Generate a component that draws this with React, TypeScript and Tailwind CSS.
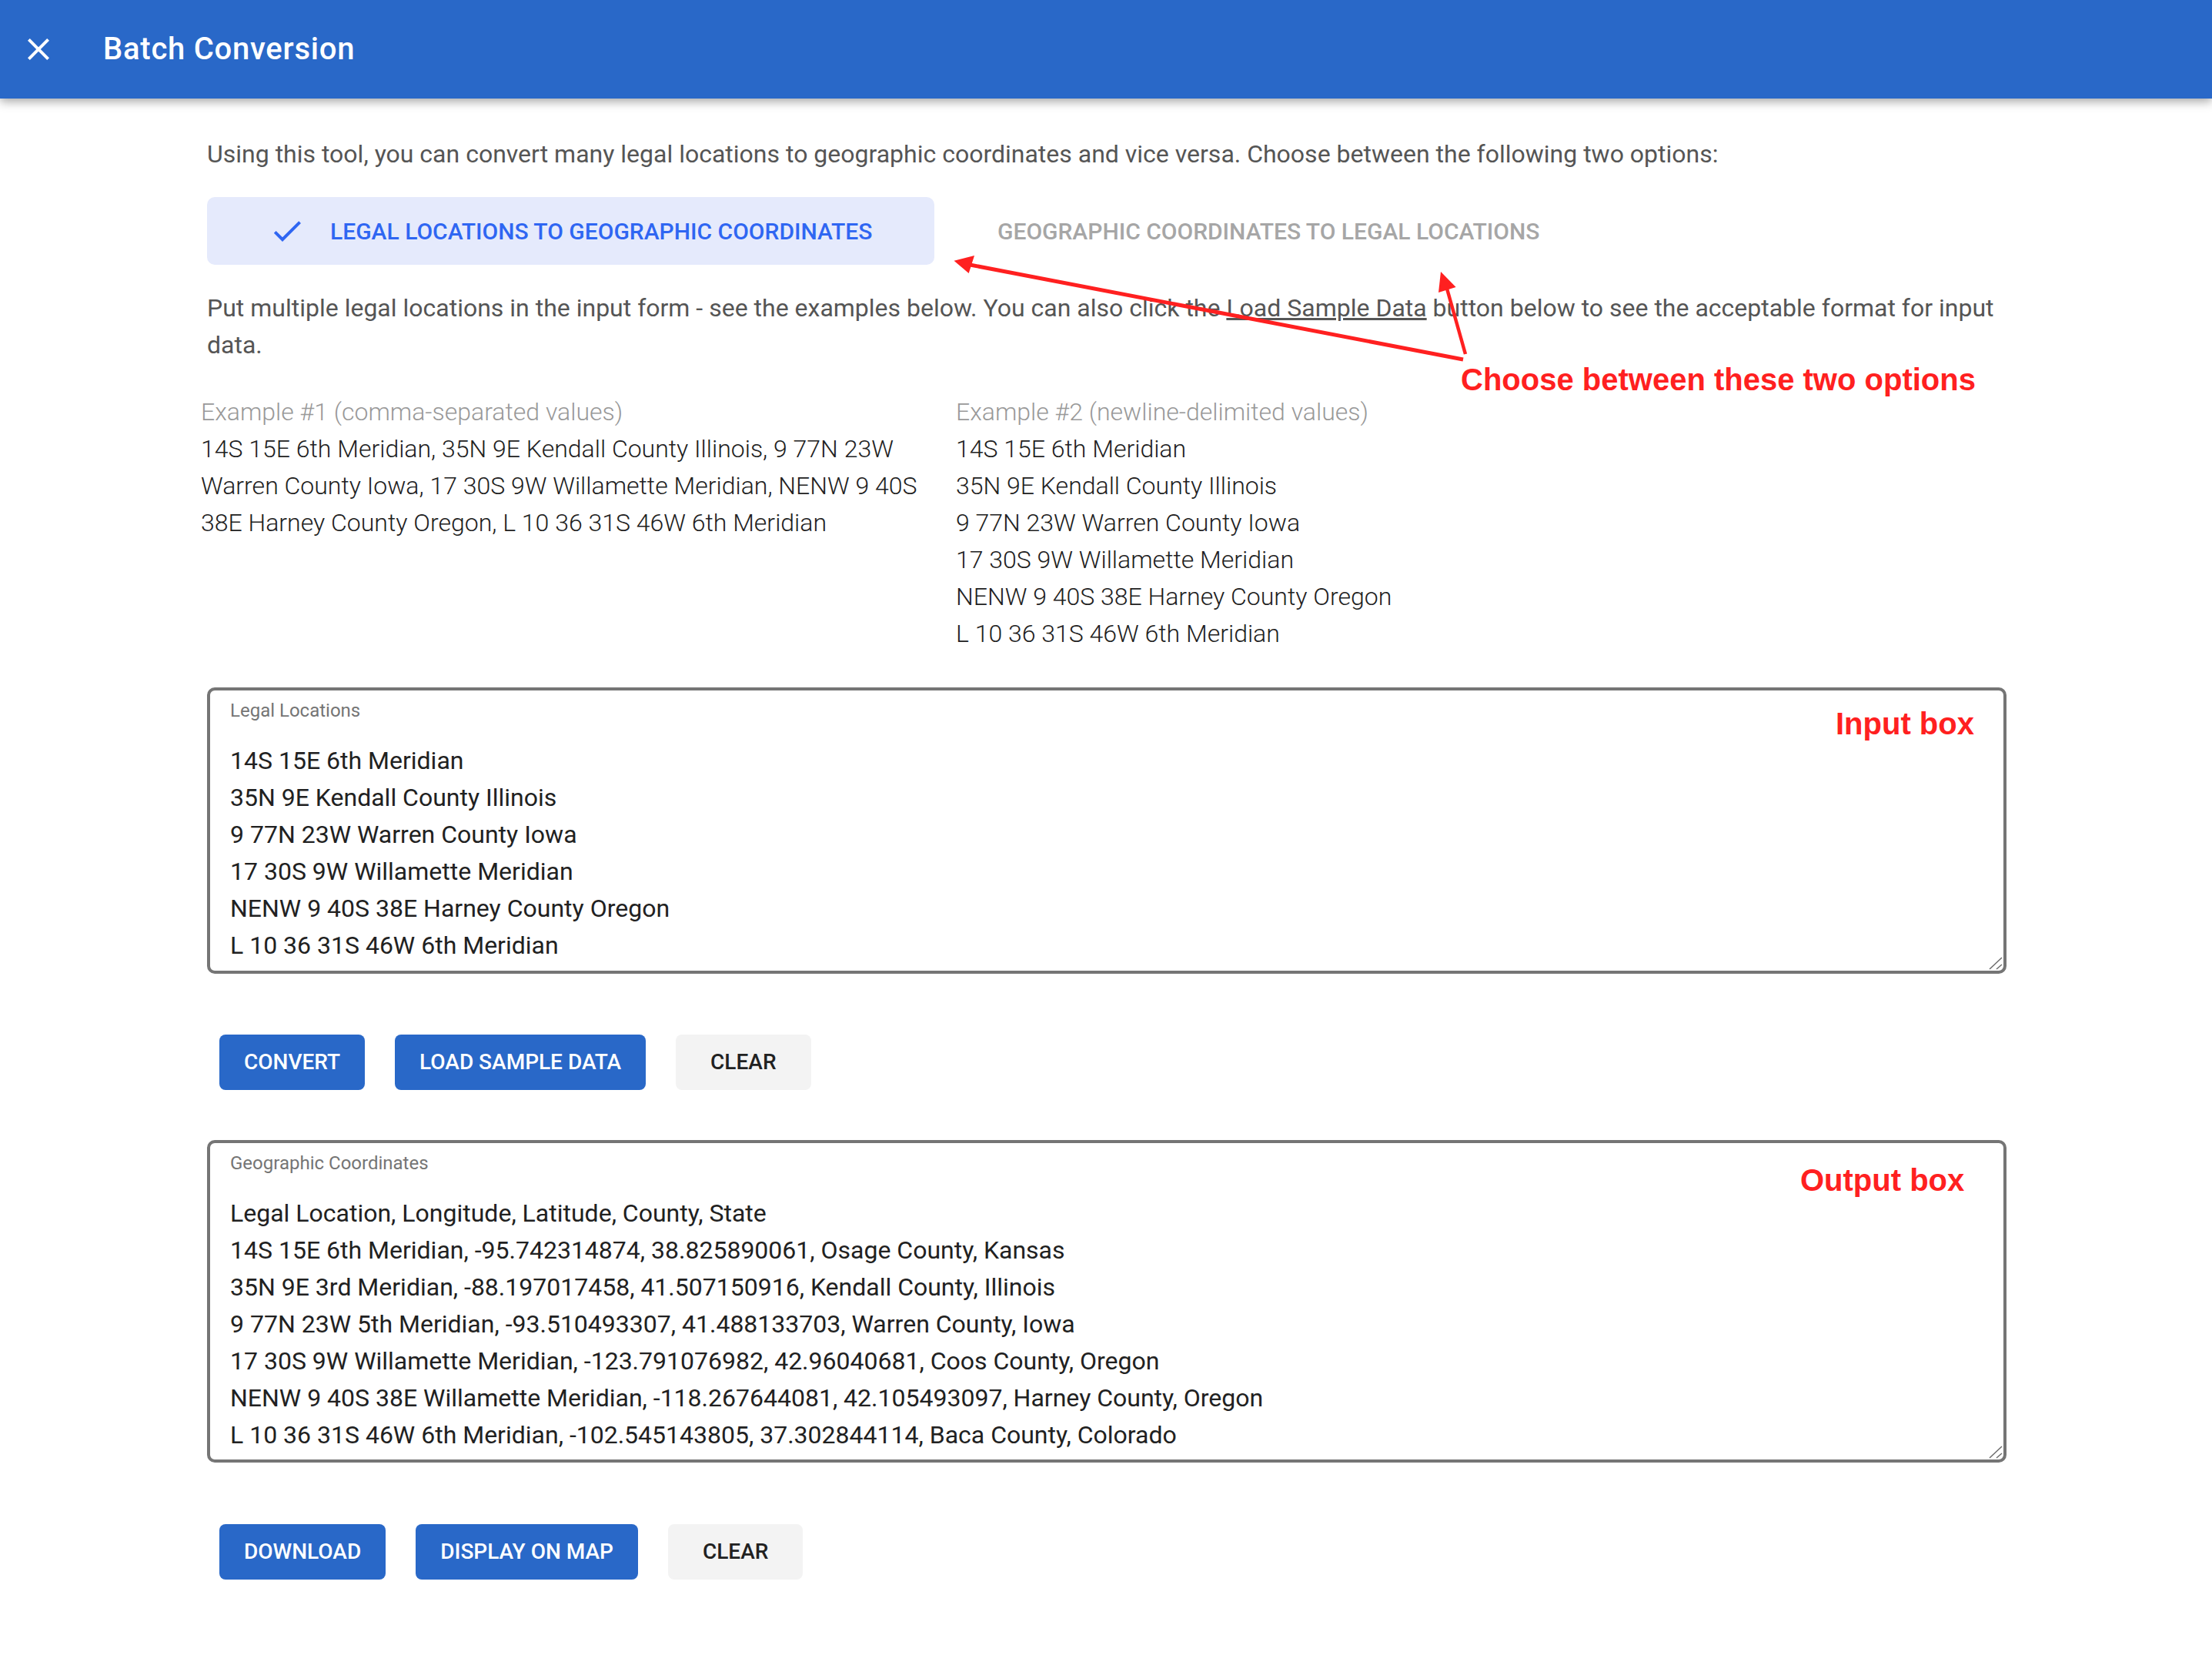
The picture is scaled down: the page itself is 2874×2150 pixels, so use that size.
function ResizeHandle() {
  return (
    <svg className="absolute bottom-0 right-0 h-[20px] w-[20px]" viewBox="0 0 20 20">
      <line x1="2" y1="18" x2="18" y2="3" stroke="#6b6b6b" strokeWidth="1.5" />
      <line x1="11" y1="18" x2="18" y2="12" stroke="#6b6b6b" strokeWidth="1.5" />
    </svg>
  );
}

export default function App() {
  const exampleLines = [
    "14S 15E 6th Meridian",
    "35N 9E Kendall County Illinois",
    "9 77N 23W Warren County Iowa",
    "17 30S 9W Willamette Meridian",
    "NENW 9 40S 38E Harney County Oregon",
    "L 10 36 31S 46W 6th Meridian",
  ];
  const outputLines = [
    "Legal Location, Longitude, Latitude, County, State",
    "14S 15E 6th Meridian, -95.742314874, 38.825890061, Osage County, Kansas",
    "35N 9E 3rd Meridian, -88.197017458, 41.507150916, Kendall County, Illinois",
    "9 77N 23W 5th Meridian, -93.510493307, 41.488133703, Warren County, Iowa",
    "17 30S 9W Willamette Meridian, -123.791076982, 42.96040681, Coos County, Oregon",
    "NENW 9 40S 38E Willamette Meridian, -118.267644081, 42.105493097, Harney County, Oregon",
    "L 10 36 31S 46W 6th Meridian, -102.545143805, 37.302844114, Baca County, Colorado",
  ];
  const primary =
    "flex h-[72px] items-center rounded-lg bg-[#2968c8] px-8 text-[28px] font-medium text-white";
  const secondary =
    "flex h-[72px] items-center rounded-lg bg-[#f3f3f3] px-[45px] text-[28px] font-medium text-[#212121]";
  const box =
    "relative w-full rounded-[10px] border-4 border-[#757575] bg-white px-[26px] text-[32px] leading-[48px] text-[#212121]";
  const label = "block text-[24px] leading-[36px] text-[#757575]";

  return (
    <div className="relative min-h-[2150px] bg-white font-['Roboto',sans-serif] text-[32px] leading-[48px] text-[#555555]">
      <header className="flex h-[128px] items-center bg-[#2968c8] pl-[26px] text-white shadow-[0_4px_12px_rgba(0,0,0,0.35)]">
        <svg viewBox="0 0 24 24" className="h-12 w-12 fill-white">
          <path d="M19 6.41 17.59 5 12 10.59 6.41 5 5 6.41 10.59 12 5 17.59 6.41 19 12 13.41 17.59 19 19 17.59 13.41 12z" />
        </svg>
        <h1 className="ml-[60px] text-[40px] font-medium tracking-[0.75px]">Batch Conversion</h1>
      </header>

      <main className="flex w-[2607px] flex-col pl-[269px] pt-[48px]">
        <p>Using this tool, you can convert many legal locations to geographic coordinates and vice versa. Choose between the following two options:</p>

        <div className="mt-8 flex h-[88px] items-center">
          <div className="flex h-full w-[945px] items-center rounded-[10px] bg-[#e5eafc] pl-[80px] text-[30px] font-medium leading-none text-[#2f66f2]">
            <svg viewBox="0 0 24 24" className="h-12 w-12 fill-[#2f66f2]">
              <path d="M9 16.17 4.83 12l-1.42 1.41L9 19 21 7l-1.41-1.41z" />
            </svg>
            <span className="ml-[32px] pt-[2px]">LEGAL LOCATIONS TO GEOGRAPHIC COORDINATES</span>
          </div>
          <span className="ml-[82px] pt-[2px] text-[30px] font-medium leading-none text-[#a6a6a6]">GEOGRAPHIC COORDINATES TO LEGAL LOCATIONS</span>
        </div>

        <p className="mt-8">
          Put multiple legal locations in the input form - see the examples below. You can also click the <span className="underline">Load Sample Data</span> button below to see the acceptable format for input data.
        </p>

        <div className="ml-[-8px] mt-[39px] grid grid-cols-[981px_1fr] font-light text-[#212121]">
          <div className="pr-[40px]">
            <div className="text-[#999999]">Example #1 (comma-separated values)</div>
            <div>14S 15E 6th Meridian, 35N 9E Kendall County Illinois, 9 77N 23W Warren County Iowa, 17 30S 9W Willamette Meridian, NENW 9 40S 38E Harney County Oregon, L 10 36 31S 46W 6th Meridian</div>
          </div>
          <div>
            <div className="text-[#999999]">Example #2 (newline-delimited values)</div>
            {exampleLines.map((l) => (
              <div key={l}>{l}</div>
            ))}
          </div>
        </div>

        <div className={`${box} mt-[46px] h-[372px] pt-[8px]`}>
          <span className={label}>Legal Locations</span>
          <div className="mt-[23px]">
            {exampleLines.map((l) => (
              <div key={l}>{l}</div>
            ))}
          </div>
          <ResizeHandle />
        </div>

        <div className="ml-[16px] mt-[79px] flex gap-[39px]">
          <div className={primary}>CONVERT</div>
          <div className={primary}>LOAD SAMPLE DATA</div>
          <div className={secondary}>CLEAR</div>
        </div>

        <div className={`${box} mt-[65px] h-[419px] pt-[8px]`}>
          <span className={label}>Geographic Coordinates</span>
          <div className="mt-[23px]">
            {outputLines.map((l) => (
              <div key={l}>{l}</div>
            ))}
          </div>
          <ResizeHandle />
        </div>

        <div className="ml-[16px] mt-[80px] flex gap-[39px]">
          <div className={primary}>DOWNLOAD</div>
          <div className={primary}>DISPLAY ON MAP</div>
          <div className={secondary}>CLEAR</div>
        </div>
      </main>

      <svg className="pointer-events-none absolute left-0 top-0 h-[2150px] w-[2874px]" viewBox="0 0 2874 2150">
        <line x1="1901" y1="467" x2="1255" y2="343" stroke="#ff2020" strokeWidth="5" />
        <polygon points="1239.5,338.7 1266,332 1258.7,355" fill="#ff2020" />
        <line x1="1904" y1="460" x2="1880" y2="375" stroke="#ff2020" strokeWidth="4.5" />
        <polygon points="1872,353 1869,380 1891.6,373" fill="#ff2020" />
      </svg>

      <span className="absolute left-[1898px] top-[473px] font-['Liberation_Sans',sans-serif] text-[40px] font-bold leading-[40px] text-[#ff2020]">Choose between these two options</span>
      <span className="absolute left-[2385px] top-[920px] font-['Liberation_Sans',sans-serif] text-[40px] font-bold leading-[40px] text-[#ff2020]">Input box</span>
      <span className="absolute left-[2339px] top-[1513px] font-['Liberation_Sans',sans-serif] text-[40px] font-bold leading-[40px] text-[#ff2020]">Output box</span>
    </div>
  );
}
